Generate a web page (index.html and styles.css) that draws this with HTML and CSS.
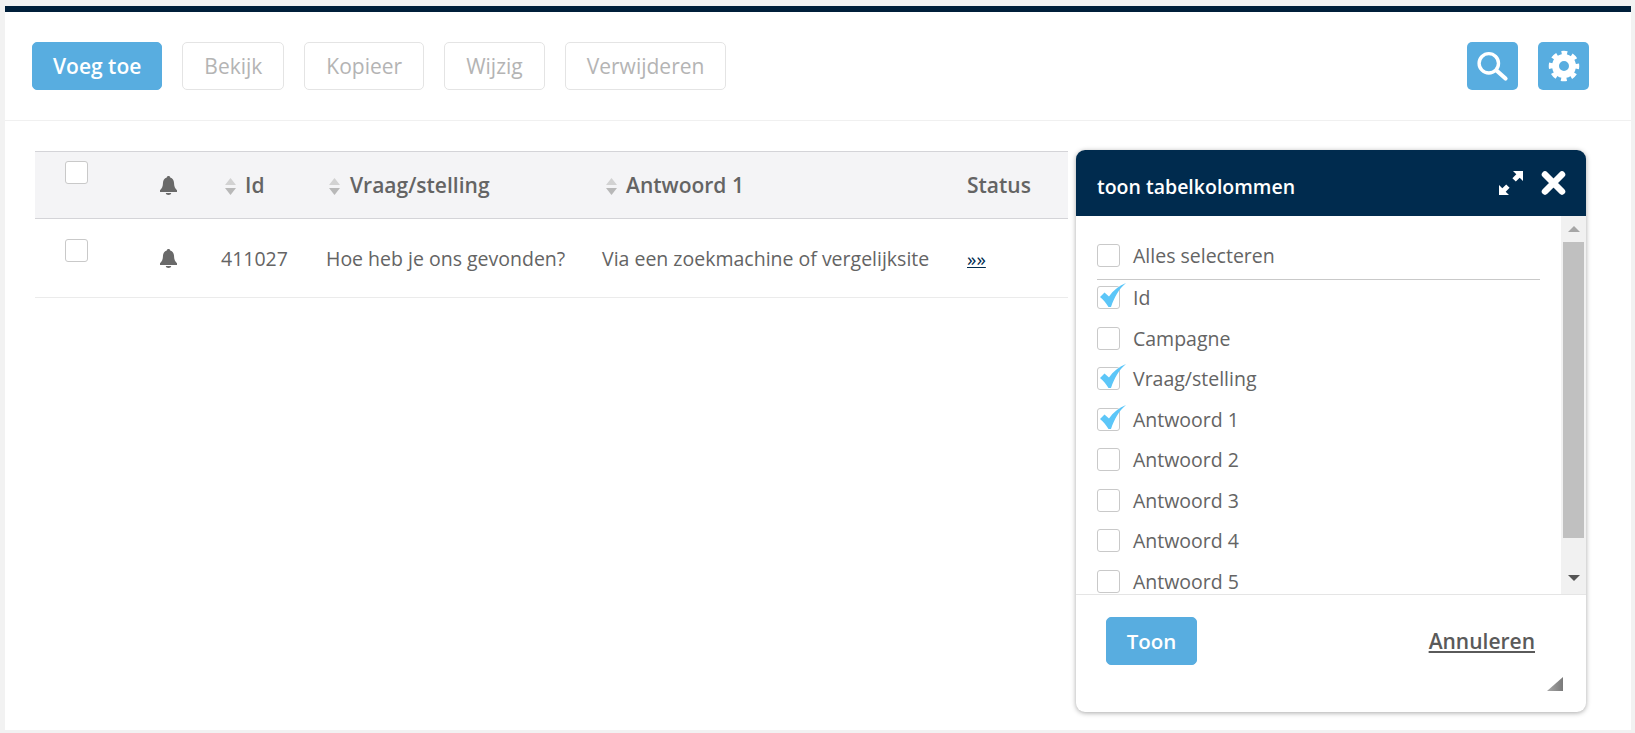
FILE: index.html
```html
<!DOCTYPE html>
<html lang="nl">
<head>
<meta charset="utf-8">
<title>Tabel</title>
<link rel="stylesheet" href="styles.css">
</head>
<body>
<svg class="defs" width="0" height="0" aria-hidden="true">
  <symbol id="bell" viewBox="0 0 17 19"><path d="M8.500 0c1 0 1.600.6 1.700 1.400 2.500.7 3.700 2.700 3.800 5.400.1 3.600 1 5.800 3 7.500v1.700H0v-1.700c2-1.700 2.900-3.900 3-7.500.1-2.700 1.300-4.700 3.800-5.400C6.900.6 7.500 0 8.500 0zM5.800 17h5.400c0 1.200-1.200 2-2.700 2s-2.700-.8-2.700-2z"/></symbol>
  <symbol id="sort" viewBox="0 0 11 17"><path class="sort-up" d="M5.500 0L11 7H0z"/><path class="sort-down" d="M0 10h11l-5.500 7z"/></symbol>
  <symbol id="check" viewBox="0 0 26 24"><path d="M0 14L4.500 9.500l4.500 4C13 7.500 18.500 3 26 0 18.500 6.500 14.500 14 11 24H8.500C6.500 20.500 3.500 17 0 14z"/></symbol>
</svg>
<div class="panel">
  <header class="toolbar">
    <div class="actions">
      <button class="btn btn-primary">Voeg toe</button>
      <button class="btn btn-off">Bekijk</button>
      <button class="btn btn-off">Kopieer</button>
      <button class="btn btn-off">Wijzig</button>
      <button class="btn btn-off">Verwijderen</button>
    </div>
    <div class="tools">
      <button class="btn-icon" aria-label="Zoeken">
        <svg width="34" height="34" viewBox="0 0 34 34"><circle cx="12.800" cy="14.300" r="9.700" fill="none" stroke="#fff" stroke-width="3.400"/><path d="M20.500 21.500l9 8" stroke="#fff" stroke-width="4.200" stroke-linecap="round"/></svg>
      </button>
      <button class="btn-icon" aria-label="Instellingen">
        <svg width="34" height="34" viewBox="0 0 34 34"><circle cx="17" cy="17" r="8.500" fill="none" stroke="#fff" stroke-width="7"/><circle cx="17" cy="17" r="13" fill="none" stroke="#fff" stroke-width="4.500" stroke-dasharray="5.600 4.610" stroke-dashoffset="2.800"/></svg>
      </button>
    </div>
  </header>
  <main class="content">
    <table class="grid">
      <colgroup><col class="c1"><col class="c2"><col class="c3"><col class="c4"><col class="c5"><col class="c6"></colgroup>
      <thead>
        <tr>
          <th class="cell-check"><span class="box"></span></th>
          <th class="cell-bell"><svg class="bell"><use href="#bell"/></svg></th>
          <th class="sortable"><svg class="sort"><use href="#sort"/></svg>Id</th>
          <th class="sortable s-narrow"><svg class="sort"><use href="#sort"/></svg>Vraag/stelling</th>
          <th class="sortable"><svg class="sort"><use href="#sort"/></svg>Antwoord 1</th>
          <th>Status</th>
        </tr>
      </thead>
      <tbody>
        <tr>
          <td class="cell-check"><span class="box"></span></td>
          <td class="cell-bell"><svg class="bell"><use href="#bell"/></svg></td>
          <td>411027</td>
          <td>Hoe heb je ons gevonden?</td>
          <td>Via een zoekmachine of vergelijksite</td>
          <td><a class="more" href="#">»»</a></td>
        </tr>
      </tbody>
    </table>
  </main>
  <section class="dialog">
    <div class="dialog-head">
      <h2 class="dialog-title">toon tabelkolommen</h2>
      <div class="dialog-tools">
        <svg width="24" height="24" viewBox="0 0 24 24"><path d="M14 0h10v10l-3.300-3.300-3.900 3.900-3.400-3.400 3.900-3.900zM10 24H0V14l3.300 3.300 3.900-3.900 3.400 3.400-3.900 3.900z" fill="#fff"/></svg>
        <svg width="25" height="24" viewBox="0 0 25 24"><path d="M4 3.500l17 17M21 3.500l-17 17" stroke="#fff" stroke-width="6.500" stroke-linecap="round"/></svg>
      </div>
    </div>
    <div class="dialog-body">
      <div class="list">
        <label class="item item-all"><span class="box"></span>Alles selecteren</label>
        <label class="item"><span class="box"><svg class="tick"><use href="#check"/></svg></span>Id</label>
        <label class="item"><span class="box"></span>Campagne</label>
        <label class="item"><span class="box"><svg class="tick"><use href="#check"/></svg></span>Vraag/stelling</label>
        <label class="item"><span class="box"><svg class="tick"><use href="#check"/></svg></span>Antwoord 1</label>
        <label class="item"><span class="box"></span>Antwoord 2</label>
        <label class="item"><span class="box"></span>Antwoord 3</label>
        <label class="item"><span class="box"></span>Antwoord 4</label>
        <label class="item"><span class="box"></span>Antwoord 5</label>
      </div>
      <div class="scrollbar">
        <span class="arrow arrow-up"></span>
        <span class="thumb"></span>
        <span class="arrow arrow-down"></span>
      </div>
    </div>
    <div class="dialog-foot">
      <button class="btn btn-primary btn-toon">Toon</button>
      <a class="cancel" href="#">Annuleren</a>
    </div>
    <span class="resize"></span>
  </section>
</div>
</body>
</html>
```
FILE: styles.css
```css
* { box-sizing: border-box; }
html, body { margin: 0; height: 100%; }
body {
  background: #f2f2f2;
  font-family: "Open Sans", "Liberation Sans", sans-serif;
  font-size: 19.500px;
  color: #646464;
  overflow: hidden;
  padding: 6px 4px 3px 5px;
}
.defs { position: absolute; }
.panel {
  position: relative;
  height: 724px;
  background: #fff;
  border-top: 6px solid #001f3a;
}
.toolbar {
  display: flex;
  justify-content: space-between;
  padding: 30px 42px 30px 27px;
  border-bottom: 1px solid #f0f0f0;
  height: 109px;
}
.actions, .tools { display: flex; }
.actions { gap: 20px; }
.tools { gap: 20px; }
.btn {
  height: 48px;
  padding: 0 21px;
  border-radius: 5px;
  font: 400 21px "Open Sans", sans-serif;
  background: #fff;
}
.btn-primary {
  background: #58ade0;
  border: 1px solid #58ade0;
  color: #fff;
  font-weight: 600;
  padding: 0 20px;
}
.btn-off {
  border: 1px solid #e4e4e4;
  color: #b4b4b4;
}
.btn-icon {
  width: 51px;
  height: 48px;
  padding: 0;
  border: 0;
  border-radius: 5px;
  background: #58ade0;
  display: flex;
  align-items: center;
  justify-content: center;
}
.content { padding: 30px 0 0 30px; }
.grid {
  width: 1033px;
  table-layout: fixed;
  border-collapse: collapse;
}
.c1 { width: 116px; }
.c2 { width: 60px; }
.c3 { width: 105px; }
.c4 { width: 276px; }
.c5 { width: 365px; }
.c6 { width: 111px; }
th, td { padding: 0 10px; text-align: left; vertical-align: middle; }
th {
  height: 67px;
  background: #f4f4f6;
  border-top: 1px solid #d4d4d8;
  border-bottom: 1px solid #d4d4d8;
  font-size: 21px;
  font-weight: 600;
  color: #646464;
}
td {
  height: 79px;
  border-bottom: 1px solid #ebebeb;
  white-space: nowrap;
}
th.cell-check { padding: 9px 0 0 30px; vertical-align: top; }
td.cell-check { padding: 20px 0 0 30px; vertical-align: top; }
th.cell-bell, td.cell-bell { padding-left: 9px; }
.sortable { padding-left: 14px; }
.s-narrow { padding-left: 13px; }
.box {
  position: relative;
  display: block;
  flex: none;
  width: 23px;
  height: 23px;
  background: #fff;
  border: 1px solid #c9c9c9;
  border-radius: 3px;
}
.bell { display: block; width: 17px; height: 19px; fill: #696969; }
.sort {
  width: 11px;
  height: 17px;
  margin-right: 9px;
  vertical-align: -2px;
}
.s-narrow .sort { margin-right: 10px; }
.sort-up { fill: #d2d2d2; }
.sort-down { fill: #b8b8b8; }
.more { color: #002b4e; font-size: 19px; }
.dialog {
  position: absolute;
  left: 1071px;
  top: 138px;
  width: 510px;
  height: 562px;
  display: flex;
  flex-direction: column;
  background: #fff;
  border-radius: 9px;
  box-shadow: 0 1px 5px rgba(0, 0, 0, .35);
}
.dialog-head {
  display: flex;
  align-items: center;
  justify-content: space-between;
  flex: none;
  height: 66px;
  padding: 0 20px 0 21px;
  background: #002b4e;
  border-radius: 9px 9px 0 0;
}
.dialog-title { margin: 6px 0 0; font-size: 19.500px; font-weight: 600; color: #fff; }
.dialog-tools { display: flex; gap: 18px; }
.dialog-body {
  display: flex;
  flex: none;
  height: 379px;
  border-bottom: 1px solid #e5e5e5;
}
.list { flex: 1; overflow: hidden; padding: 28px 21px 0 21px; }
.item {
  display: flex;
  align-items: center;
  gap: 13px;
  height: 23px;
  margin-bottom: 17.500px;
}
.item-all {
  height: 36px;
  margin-bottom: 6px;
  padding-bottom: 12px;
  border-bottom: 1px solid #c9c9c9;
}
.tick {
  position: absolute;
  left: 2px;
  top: -4px;
  width: 26px;
  height: 24px;
  fill: #5cc6f8;
}
.scrollbar {
  flex: none;
  width: 25px;
  display: flex;
  flex-direction: column;
  align-items: center;
  background: #f1f1f1;
}
.arrow { flex: none; width: 0; height: 0; border: 6px solid transparent; border-top: 0; border-bottom: 0; }
.arrow-up { margin: 10px 0 10px; border-bottom: 6px solid #a6a6a6; }
.arrow-down { margin-top: 37px; border-top: 6px solid #555; }
.thumb { flex: none; width: 21px; height: 296px; background: #c0c0c0; }
.dialog-foot {
  display: flex;
  justify-content: space-between;
  align-items: center;
  padding: 22px 51px 0 30px;
}
.btn-toon { width: 91px; padding: 0; font-size: 20.500px; }
.cancel { color: #5a5a5a; font-size: 21px; font-weight: 600; }
.resize {
  position: absolute;
  right: 23px;
  bottom: 21px;
  width: 16px;
  height: 14px;
  background: linear-gradient(90deg, #a8a8a8, #7a7a7a);
  clip-path: polygon(100% 0, 100% 100%, 0 100%);
}
```
